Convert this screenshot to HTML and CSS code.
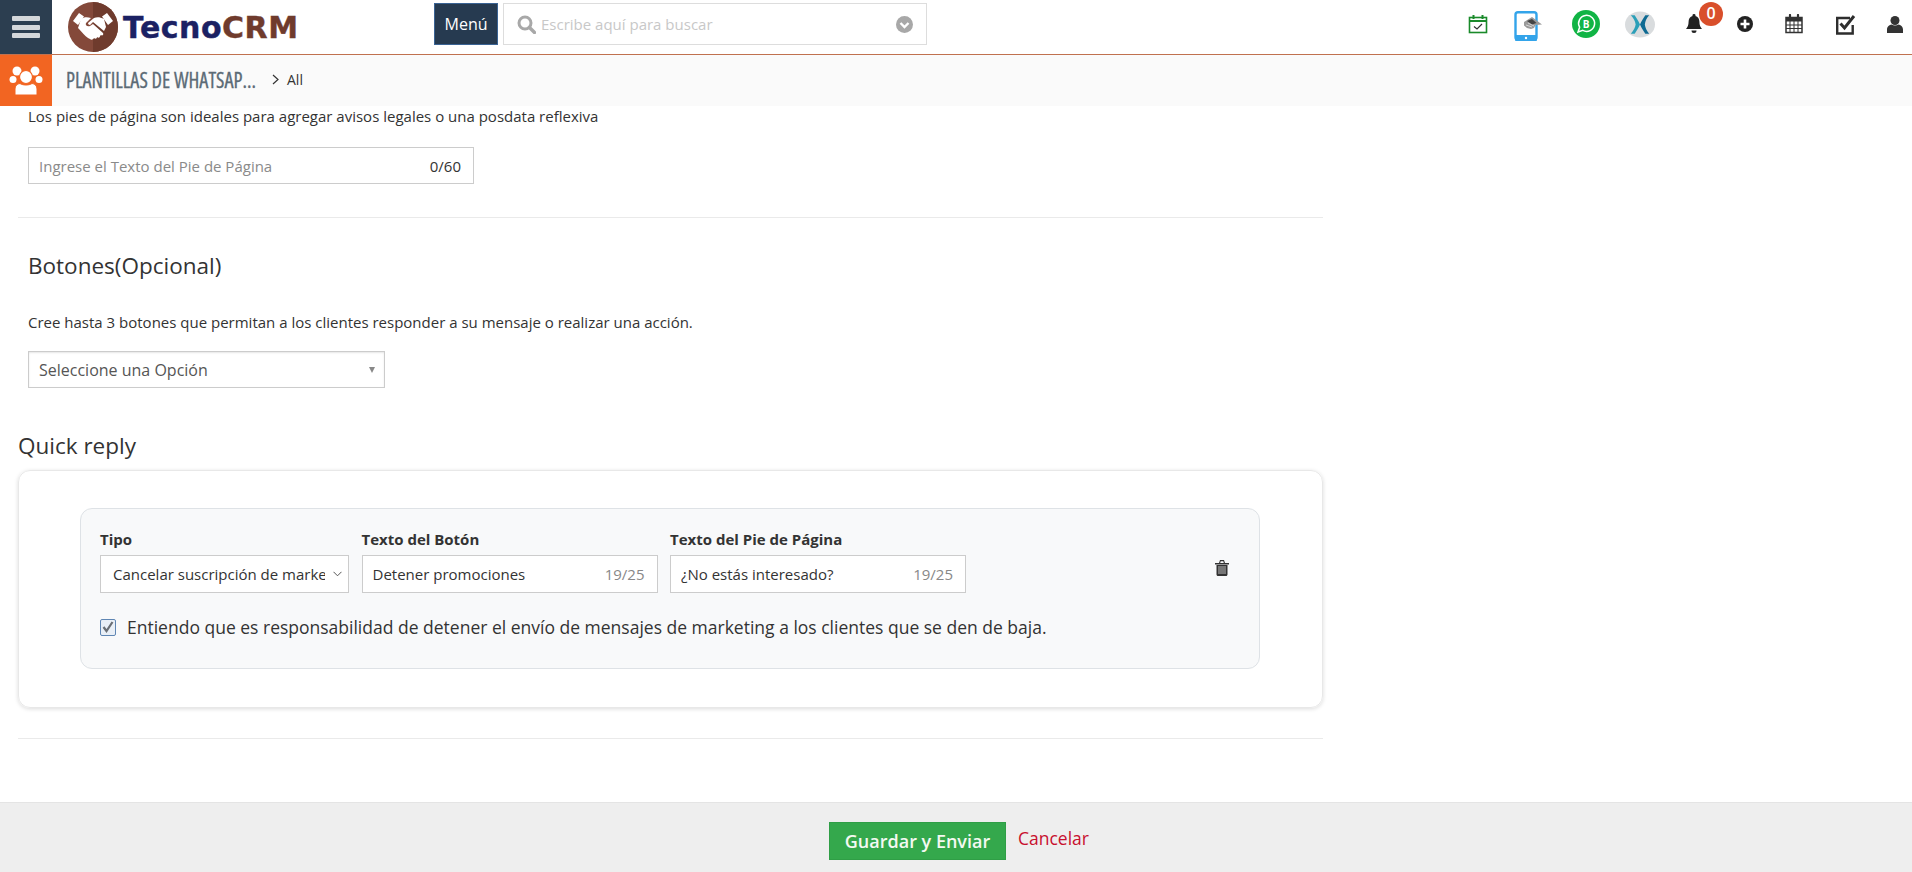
FILE: index.html
```html
<!DOCTYPE html>
<html lang="es">
<head>
<meta charset="UTF-8">
<meta name="viewport" content="width=device-width, initial-scale=1.0">
<title>TecnoCRM - Plantillas de WhatsApp</title>
<link rel="stylesheet" href="styles.css">
</head>
<body>
<div class="page">

    <header class="topbar">
        <div class="burger"><span></span><span></span><span></span></div>
        <div class="logo">
            <svg class="logo-mark" width="50" height="50" viewBox="0 0 50 50">
                <circle cx="25" cy="25" r="25" fill="#84493a"/>
                <path d="M25 0a25 25 0 0 1 0 50z" fill="#6f3b2d"/>
                <path d="M5 19l6-8 5 3.500-6 8.500zM45 19l-6-8-5 3.500 6 8.500z" fill="#fff"/>
                <path d="M13 17c3-2 6-2 10-1l-5 5c-1 2 1 4 4 3l3-2 10 9c1 2-1 3-2 2l-1 1c0 2-2 2-3 1 0 2-2 2-3 1-1 2-3 2-4 1l-2-1c-3-2-6-6-9-9l-1-1z" fill="#fff"/>
                <path d="M26 16c3-1 6-1 10 1l2 8-2 4-11-9-3 3c-1 0-2-1-2-2z" fill="#fff"/>
            </svg>
            <span class="logo-text">Tecno<b>CRM</b></span>
        </div>
        <button class="menu-btn">Menú</button>
        <div class="search">
            <svg width="19" height="19" viewBox="0 0 19 19">
                <circle cx="8" cy="8" r="6" fill="none" stroke="#a8a8a8" stroke-width="3"/>
                <path d="M12.500 12.500l5 5" stroke="#a8a8a8" stroke-width="3.400" stroke-linecap="round"/>
            </svg>
            <input type="text" placeholder="Escribe aquí para buscar">
            <svg width="17" height="17" viewBox="0 0 17 17">
                <circle cx="8.500" cy="8.500" r="8.500" fill="#a8a8a8"/>
                <path d="M4.500 7l4 4 4-4" fill="none" stroke="#fff" stroke-width="2.400"/>
            </svg>
        </div>
        <div class="tools">
            <div class="tool">
                <svg width="20" height="20" viewBox="0 0 20 20">
                    <rect x="1.500" y="3.500" width="17" height="15" fill="none" stroke="#1a8a2a" stroke-width="1.600"/>
                    <path d="M1.500 7h17" stroke="#1a8a2a" stroke-width="2"/>
                    <path d="M5.500 1v4M14.500 1v4" stroke="#1a8a2a" stroke-width="2"/>
                    <path d="M6 12.500l3 2.500 5-5" fill="none" stroke="#333" stroke-width="1.200"/>
                </svg>
            </div>
            <div class="tool tool-low">
                <svg width="30" height="30" viewBox="0 0 30 30">
                    <rect x="2.500" y="1.200" width="21" height="27.600" rx="2.500" fill="#fff" stroke="#33a4ea" stroke-width="2.400"/>
                    <path d="M2 24h22v5a1 1 0 0 1-1 1H3a1 1 0 0 1-1-1z" fill="#33a4ea"/>
                    <circle cx="13" cy="27" r="1.200" fill="#fff"/>
                    <path d="M11 11l8-5 10 7.500-6.500.5-1.500 3-3 1-4-1-3-2.500z" fill="#9a9a9a"/>
                    <path d="M14 10l5-2 4.500 4-4.500 1.500z" fill="#444"/>
                    <path d="M13 14l6 2M15 12l6 3" stroke="#eee" stroke-width=".7"/>
                </svg>
            </div>
            <div class="tool">
                <svg width="28" height="28" viewBox="0 0 28 28">
                    <circle cx="14" cy="14" r="14" fill="#11b445"/>
                    <path d="M6 22l1.600-4.800a8 8 0 1 1 3.200 3.200z" fill="none" stroke="#fff" stroke-width="1.500"/>
                    <text x="14.200" y="17.500" class="biz-b">B</text>
                </svg>
            </div>
            <div class="tool">
                <svg width="31" height="27" viewBox="0 0 31 27">
                    <ellipse cx="15.500" cy="13.500" rx="15.500" ry="13.500" fill="#d9dcde"/>
                    <path d="M6 4h4c2 3 4 6 5.500 9.500C14 17 12 20 10 23H6c3-3.500 4.500-6.500 5-9.500C10.500 10 9 7 6 4z" fill="#2b9fb8"/>
                    <path d="M25 4h-4c-2 3-4 6-5.500 9.500C17 17 19 20 21 23h4c-3-3.500-4-6.500-4.500-9.500C21 10 22 7 25 4z" fill="#0e6a92"/>
                </svg>
            </div>
            <div class="tool">
                <svg width="16" height="20" viewBox="0 0 16 20">
                    <path d="M8 0a1.400 1.400 0 0 1 1.400 2C12 2.600 13.400 5 13.400 7.500c0 4 1 5.500 2.600 7.500H0c1.600-2 2.600-3.500 2.600-7.500C2.600 5 4 2.600 6.600 2A1.400 1.400 0 0 1 8 0z" fill="#222"/>
                    <path d="M5.500 16.500h5a2.500 2.500 0 0 1-5 0z" fill="#222"/>
                </svg>
                <span class="badge">0</span>
            </div>
            <div class="tool">
                <svg width="16" height="16" viewBox="0 0 16 16">
                    <circle cx="8" cy="8" r="8" fill="#222"/>
                    <path d="M8 3.500v9M3.500 8h9" stroke="#fff" stroke-width="2.600"/>
                </svg>
            </div>
            <div class="tool">
                <svg width="18" height="20" viewBox="0 0 18 20">
                    <path d="M1 3.500h16v15H1z" fill="#fff" stroke="#333" stroke-width="1.500"/>
                    <path d="M1 4h16v3.500H1z" fill="#333"/>
                    <path d="M5 1v4M13 1v4" stroke="#333" stroke-width="2.200" stroke-linecap="round"/>
                    <path d="M1 11h16M1 14.500h16M5 7v11M9 7v11M13 7v11" stroke="#333"/>
                </svg>
            </div>
            <div class="tool">
                <svg width="21" height="21" viewBox="0 0 21 21">
                    <path d="M15 4H2.200v15.500h15.500V11" fill="none" stroke="#2e2e2e" stroke-width="2.400"/>
                    <path d="M5.500 9.500l4 4.500L19 2" fill="none" stroke="#2e2e2e" stroke-width="3"/>
                </svg>
            </div>
            <div class="tool">
                <svg width="16" height="17" viewBox="0 0 16 17">
                    <circle cx="8" cy="4.500" r="4.500" fill="#333"/>
                    <path d="M0 17v-3.500C0 10.500 2.500 9 4.500 8.500c2 1.200 5 1.200 7 0 2 .5 4.500 2 4.500 5V17z" fill="#333"/>
                </svg>
            </div>
        </div>
    </header>

    <div class="subbar">
        <div class="module-icon">
            <svg width="34" height="30" viewBox="0 0 34 30" fill="#fff">
                <circle cx="8" cy="5" r="4.500"/>
                <circle cx="26" cy="5" r="4.500"/>
                <circle cx="4" cy="13.500" r="3.500"/>
                <circle cx="30" cy="13.500" r="3.500"/>
                <circle cx="17" cy="11" r="6.500" stroke="#f26522" stroke-width="1.200"/>
                <path d="M6 29v-6c0-3 2-5.500 5-5.500 3 2 9 2 12 0 3 0 5 2.500 5 5.500v6z" stroke="#f26522"/>
            </svg>
        </div>
        <div class="module-title">PLANTILLAS DE WHATSAP...</div>
        <svg class="crumb-sep" width="7" height="11" viewBox="0 0 7 11">
            <path d="M1 1l5 4.500L1 10" fill="none" stroke="#333" stroke-width="1.200"/>
        </svg>
        <span class="crumb">All</span>
    </div>

    <main class="content">
        <p class="hint">Los pies de página son ideales para agregar avisos legales o una posdata reflexiva</p>
        <div class="field footer-field">
            <input type="text" placeholder="Ingrese el Texto del Pie de Página">
            <span class="count dark">0/60</span>
        </div>
        <hr class="rule rule-first">

        <h2 class="section-title">Botones(Opcional)</h2>
        <p class="hint hint-buttons">Cree hasta 3 botones que permitan a los clientes responder a su mensaje o realizar una acción.</p>
        <div class="picker">
            <span>Seleccione una Opción</span>
            <i class="caret"></i>
        </div>

        <h2 class="group-title">Quick reply</h2>
        <section class="card">
            <div class="reply">
                <div class="reply-row">
                    <div class="col col-type">
                        <label>Tipo</label>
                        <div class="field type-field">
                            <span class="cut">Cancelar suscripción de marke</span>
                            <svg width="9" height="6" viewBox="0 0 9 6">
                                <path d="M.5 .8l4 4 4-4" fill="none" stroke="#555"/>
                            </svg>
                        </div>
                    </div>
                    <div class="col">
                        <label>Texto del Botón</label>
                        <div class="field">
                            <input type="text" value="Detener promociones">
                            <span class="count">19/25</span>
                        </div>
                    </div>
                    <div class="col">
                        <label>Texto del Pie de Página</label>
                        <div class="field">
                            <input type="text" value="¿No estás interesado?">
                            <span class="count">19/25</span>
                        </div>
                    </div>
                    <svg class="trash" width="14" height="16" viewBox="0 0 14 16">
                        <path d="M0 3h14v1.500H0zM5 0h4l1 3H8.800L8.300 1.300H5.700L5.200 3H4z" fill="#333"/>
                        <path d="M1.500 5h11v9.500c0 .8-.6 1.500-1.500 1.500H3c-.9 0-1.500-.7-1.500-1.500z" fill="#333"/>
                        <path d="M4 6v8M6 6v8M8 6v8M10 6v8" stroke="#ddd" stroke-width=".8"/>
                    </svg>
                </div>
                <div class="agree">
                    <span class="check">
                        <svg width="14" height="14" viewBox="0 0 14 14">
                            <path d="M2.500 7l3 4L11.500 2" fill="none" stroke="#6a6f75" stroke-width="2.200"/>
                        </svg>
                    </span>
                    <span>Entiendo que es responsabilidad de detener el envío de mensajes de marketing a los clientes que se den de baja.</span>
                </div>
            </div>
        </section>
        <hr class="rule rule-last">
    </main>

    <footer class="actions">
        <button class="save">Guardar y Enviar</button>
        <a class="cancel" href="#">Cancelar</a>
    </footer>

</div>
</body>
</html>
```

FILE: styles.css
```css
* {
    box-sizing: border-box;
}

body {
    margin: 0;
    font-family: "Open Sans", Arial, sans-serif;
    font-size: 15px;
    color: #333;
    background-color: #fff;
}

.page {
    display: flex;
    flex-direction: column;
    height: 100vh;
    overflow: hidden;
}

/* top bar */
.topbar {
    display: flex;
    align-items: center;
    flex: none;
    height: 55px;
    border-bottom: 1px solid #c0714f;
}

.burger {
    display: flex;
    flex-direction: column;
    justify-content: center;
    gap: 3.5px;
    width: 52px;
    height: 54px;
    padding: 0 12px;
    background-color: #2c3e50;
}

.burger span {
    height: 5px;
    border-radius: 1px;
    background-color: #d4d7da;
}

.logo {
    display: flex;
    align-items: center;
    gap: 5px;
    width: 382px;
    padding-left: 16px;
}

.logo-text {
    font-family: "DejaVu Sans", Arial, sans-serif;
    font-weight: 700;
    font-size: 30px;
    letter-spacing: .5px;
    color: #1b2163;
    -webkit-text-stroke: .4px currentColor;
}

.logo-text b {
    color: #6f3b2d;
}

.menu-btn {
    width: 64px;
    height: 42px;
    margin-bottom: 6px;
    padding: 0;
    border: 1px solid #3a6394;
    background-color: #263a50;
    color: #fff;
    font-family: inherit;
    font-size: 16px;
}

.search {
    display: flex;
    align-items: center;
    gap: 5px;
    width: 424px;
    height: 42px;
    margin-left: 5px;
    margin-bottom: 6px;
    padding: 0 13px;
    border: 1px solid #ddd;
}

.search input {
    flex: 1;
    min-width: 0;
    border: 0;
    outline: 0;
    padding: 0;
    font-family: inherit;
    font-size: 15px;
}

.search input::placeholder {
    color: #c8c8c8;
}

.tools {
    display: grid;
    grid-template-columns: 50px 58px 54px 54px 51px 49px 51px 50px 30px;
    margin-left: auto;
    margin-right: 2px;
    margin-bottom: 6px;
}

.tool {
    position: relative;
    display: flex;
    align-items: center;
    justify-content: center;
    width: 30px;
    height: 48px;
}

.tool-low {
    padding-top: 4px;
}

.biz-b {
    font-family: "Open Sans", sans-serif;
    font-size: 10px;
    font-weight: 700;
    fill: #fff;
    text-anchor: middle;
}

.badge {
    position: absolute;
    top: 2px;
    left: 20px;
    width: 24px;
    height: 24px;
    border-radius: 50%;
    background-color: #d94f2b;
    color: #fff;
    font-size: 16px;
    font-weight: 600;
    line-height: 23px;
    text-align: center;
}

/* module bar */
.subbar {
    display: flex;
    align-items: center;
    flex: none;
    height: 51px;
    background-color: #fafafa;
}

.module-icon {
    display: flex;
    align-items: center;
    justify-content: center;
    width: 52px;
    height: 51px;
    background-color: #f26522;
}

.module-title {
    width: 206px;
    margin-left: 14px;
    margin-bottom: 4px;
    color: #5c6b76;
    font-size: 22px;
    font-stretch: 75%;
    white-space: nowrap;
    transform: scaleX(.93);
    transform-origin: left center;
    -webkit-text-stroke: .3px currentColor;
}

.crumb-sep {
    margin-right: 8px;
    margin-bottom: 2px;
}

.crumb {
    margin-bottom: 2px;
    font-size: 14px;
    color: #333;
}

/* form */
.content {
    flex: 1;
    width: 1323px;
    padding-left: 18px;
}

.hint {
    margin: 0 0 0 10px;
    font-size: 15px;
    line-height: 20px;
}

.hint-buttons {
    margin-top: 32px;
}

.field {
    display: flex;
    align-items: center;
    height: 38px;
    padding: 0 12px 0 10px;
    border: 1px solid #ccc;
    background-color: #fff;
}

.field input {
    flex: 1;
    min-width: 0;
    border: 0;
    outline: 0;
    padding: 0;
    background: transparent;
    color: #333;
    font-family: inherit;
    font-size: 15px;
}

.field input::placeholder {
    color: #8a8a8a;
}

.count {
    color: #888;
    font-size: 15px;
}

.count.dark {
    color: #333;
}

.footer-field {
    width: 446px;
    height: 37px;
    margin: 21px 0 0 10px;
}

.rule {
    height: 1px;
    margin: 0;
    border: 0;
    background-color: #eaeaea;
}

.rule-first {
    margin-top: 33px;
}

.rule-last {
    margin-top: 30px;
}

.section-title,
.group-title {
    margin: 34px 0 0 10px;
    font-size: 22.5px;
    font-weight: 400;
    line-height: 28px;
}

.group-title {
    margin: 44px 0 0;
}

.picker {
    display: flex;
    align-items: center;
    justify-content: space-between;
    width: 357px;
    height: 37px;
    margin: 19px 0 0 10px;
    padding: 0 9px 0 10px;
    border: 1px solid #ccc;
    box-shadow: inset 0 1px 2px rgba(0, 0, 0, .1);
    font-size: 16px;
    color: #555;
}

.caret {
    width: 0;
    height: 0;
    border-left: 3.5px solid transparent;
    border-right: 3.5px solid transparent;
    border-top: 6px solid #888;
}

.card {
    margin-top: 10px;
    padding: 37px 62px 38px 61px;
    border: 1px solid #e8e8e8;
    border-radius: 12px;
    box-shadow: 0 1px 4px rgba(0, 0, 0, .14);
}

.reply {
    padding: 20px 30px 31px 19px;
    border: 1px solid #dee2e6;
    border-radius: 12px;
    background-color: #f8f9fa;
}

.reply-row {
    display: flex;
    gap: 12.5px;
}

.col {
    display: flex;
    flex-direction: column;
    gap: 6px;
    width: 296px;
}

.col-type {
    width: 249px;
}

.col label {
    font-size: 15px;
    font-weight: 700;
    line-height: 20px;
}

.type-field {
    gap: 8px;
    padding-right: 6px;
    padding-left: 12px;
}

.cut {
    flex: 1;
    overflow: hidden;
    white-space: nowrap;
}

.trash {
    margin: 31px 0 0 auto;
}

.agree {
    display: flex;
    align-items: center;
    gap: 11px;
    margin-top: 24px;
    font-size: 17.5px;
    line-height: 20px;
}

.check {
    display: flex;
    align-items: center;
    justify-content: center;
    width: 16px;
    height: 17px;
    border: 1px solid #5f86b3;
    border-radius: 2px;
    background-color: #e9eff6;
}

/* bottom action bar */
.actions {
    display: flex;
    align-items: center;
    flex: none;
    gap: 12px;
    height: 70px;
    padding-top: 7px;
    padding-left: 829px;
    border-top: 1px solid #e4e4e4;
    background-color: #eee;
}

.save {
    width: 177px;
    height: 38px;
    padding: 0;
    border: 1px solid #2f9e46;
    background-color: #34a84c;
    color: #f4f9f2;
    font-family: inherit;
    font-size: 18px;
    font-weight: 600;
}

.cancel {
    margin-top: -7px;
    color: #c8102e;
    font-size: 17.5px;
    text-decoration: none;
}
```
